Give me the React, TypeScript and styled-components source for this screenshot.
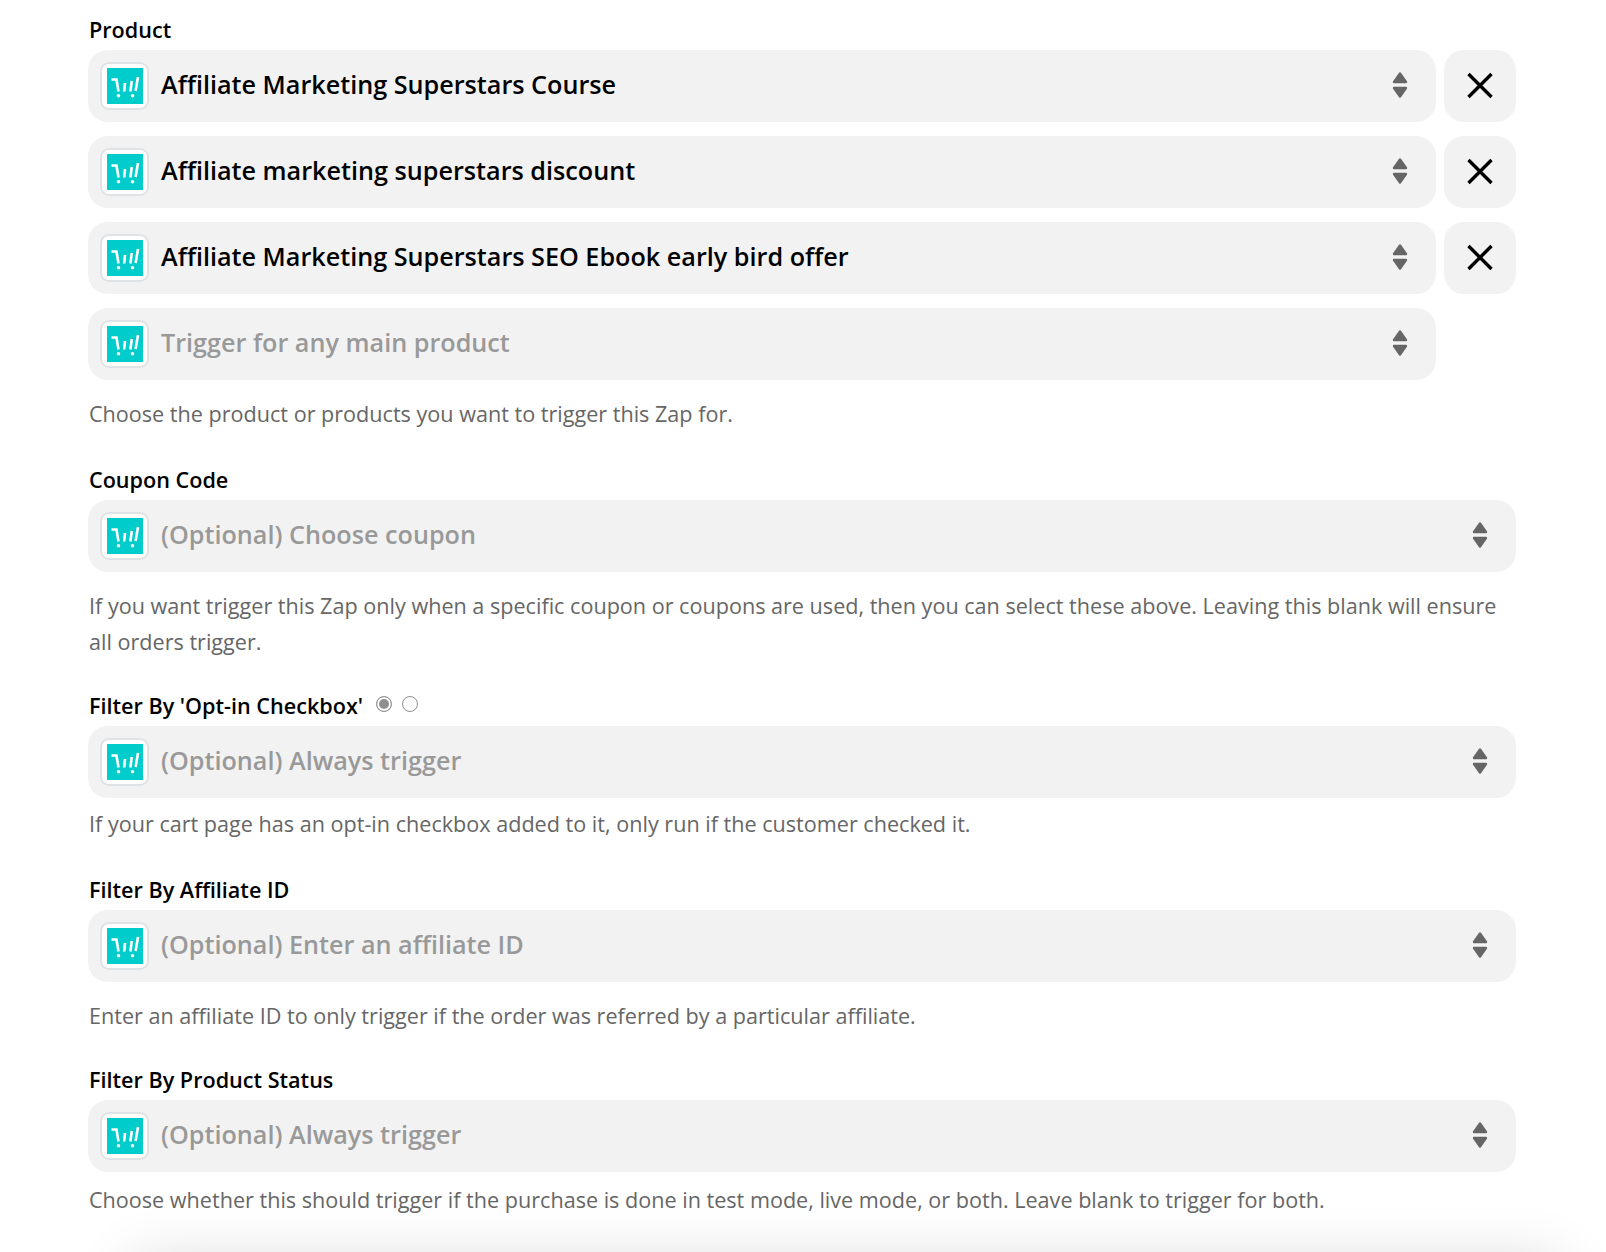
import React from "react";
import styled, { createGlobalStyle } from "styled-components";

const Global = createGlobalStyle`
  html, body { margin: 0; padding: 0; background: #fff; }
  body { font-family: "Open Sans", "Noto Sans", sans-serif; }
`;

const Page = styled.div`
  width: 1606px;
  height: 1252px;
  overflow: hidden;
  box-sizing: border-box;
  padding: 16px 90px 0 88px;
  display: flex;
  flex-direction: column;
`;

const Group = styled.section<{ $mt: number }>`
  margin-top: ${(p) => p.$mt}px;
`;

const LabelRow = styled.div`
  display: flex;
  align-items: center;
  height: 28px;
  padding-left: 1px;
  margin-bottom: 6px;
`;

const Label = styled.label`
  font-size: 21.6px;
  font-weight: 600;
  line-height: 28px;
  color: #000;
`;

const Radios = styled.div`
  display: flex;
  gap: 10px;
  margin-left: 13px;
  margin-top: -4px;
`;

const Radio = styled.span<{ $on?: boolean }>`
  box-sizing: border-box;
  width: 16px;
  height: 16px;
  border-radius: 50%;
  border: 1px solid #8f8f8f;
  background: ${(p) => (p.$on ? "#8f8f8f" : "#fff")};
  box-shadow: ${(p) => (p.$on ? "inset 0 0 0 2px #fff" : "none")};
`;

const Rows = styled.div`
  display: flex;
  flex-direction: column;
  gap: 14px;
`;

const Row = styled.div`
  display: flex;
  gap: 8px;
`;

const Field = styled.div`
  flex: 1;
  height: 72px;
  box-sizing: border-box;
  background: #f2f2f2;
  border-radius: 20px;
  padding: 0 28px 0 12px;
  display: flex;
  align-items: center;
`;

const IconBox = styled.span`
  box-sizing: border-box;
  width: 49px;
  height: 48px;
  background: #fff;
  border: 2px solid #dfe3e6;
  border-radius: 9px;
  display: flex;
  align-items: center;
  justify-content: center;
  flex: none;
`;

const Value = styled.span<{ $placeholder?: boolean }>`
  flex: 1;
  margin-left: 12px;
  padding-bottom: 4px;
  font-size: 25.2px;
  font-weight: 600;
  line-height: 34px;
  color: ${(p) => (p.$placeholder ? "#999999" : "#000")};
  white-space: nowrap;
`;

const RemoveButton = styled.button`
  width: 72px;
  height: 72px;
  border: none;
  padding: 0;
  background: #f2f2f2;
  border-radius: 20px;
  display: flex;
  align-items: center;
  justify-content: center;
  flex: none;
`;

const RemoveSpacer = styled.span`
  width: 72px;
  flex: none;
`;

const Help = styled.p<{ $mt: number }>`
  margin: ${(p) => p.$mt}px 0 0;
  padding-left: 1px;
  font-size: 21.6px;
  line-height: 36px;
  color: #666666;
`;

const FooterShadow = styled.div`
  flex: none;
  height: 60px;
  margin: 45px -44px 0 44px;
  background: #fff;
  box-shadow: 0 0 60px rgba(0, 0, 0, 0.16);
`;

const CartLogo = () => (
  <svg width="36" height="36" viewBox="0 0 36 36" aria-hidden="true">
    <rect width="36" height="36" fill="#00cccc" />
    <g fill="none" stroke="#fff" strokeWidth="2.6">
      <path d="M4.5 11.5H9.5L11.5 23.5" />
      <path d="M18 15L17.2 23.5" />
      <path d="M24.8 13L23.4 23.5" />
      <path d="M31 9L28.6 23" />
    </g>
    <circle cx="11.5" cy="27.8" r="1.8" fill="#fff" />
    <circle cx="25.5" cy="27.8" r="1.8" fill="#fff" />
  </svg>
);

const Updown = () => (
  <svg width="16" height="28" viewBox="0 1 16 28" aria-hidden="true">
    <path d="M8 2.5L14 11H2Z" fill="#666" stroke="#666" strokeWidth="2.4" strokeLinejoin="round" />
    <path d="M8 25.5L14 17H2Z" fill="#666" stroke="#666" strokeWidth="2.4" strokeLinejoin="round" />
  </svg>
);

const Cross = () => (
  <svg width="28" height="28" viewBox="0 0.5 28 28" aria-hidden="true">
    <path d="M2.5 2.5L25.5 25.5M25.5 2.5L2.5 25.5" stroke="#000" strokeWidth="3.4" fill="none" />
  </svg>
);

const Select = ({ text, placeholder }: { text: string; placeholder?: boolean }) => (
  <Field>
    <IconBox>
      <CartLogo />
    </IconBox>
    <Value $placeholder={placeholder}>{text}</Value>
    <Updown />
  </Field>
);

const products = [
  "Affiliate Marketing Superstars Course",
  "Affiliate marketing superstars discount",
  "Affiliate Marketing Superstars SEO Ebook early bird offer",
];

export default function App() {
  return (
    <Page>
      <Global />
      <Group $mt={0}>
        <LabelRow>
          <Label>Product</Label>
        </LabelRow>
        <Rows>
          {products.map((p) => (
            <Row key={p}>
              <Select text={p} />
              <RemoveButton aria-label="Remove">
                <Cross />
              </RemoveButton>
            </Row>
          ))}
          <Row>
            <Select text="Trigger for any main product" placeholder />
            <RemoveSpacer />
          </Row>
        </Rows>
        <Help $mt={16}>Choose the product or products you want to trigger this Zap for.</Help>
      </Group>
      <Group $mt={34}>
        <LabelRow>
          <Label>Coupon Code</Label>
        </LabelRow>
        <Select text="(Optional) Choose coupon" placeholder />
        <Help $mt={16}>
          If you want trigger this Zap only when a specific coupon or coupons are used, then you can select these above. Leaving this blank will ensure all orders trigger.
        </Help>
      </Group>
      <Group $mt={32}>
        <LabelRow>
          <Label>Filter By 'Opt-in Checkbox'</Label>
          <Radios>
            <Radio $on />
            <Radio />
          </Radios>
        </LabelRow>
        <Select text="(Optional) Always trigger" placeholder />
        <Help $mt={8}>If your cart page has an opt-in checkbox added to it, only run if the customer checked it.</Help>
      </Group>
      <Group $mt={34}>
        <LabelRow>
          <Label>Filter By Affiliate ID</Label>
        </LabelRow>
        <Select text="(Optional) Enter an affiliate ID" placeholder />
        <Help $mt={16}>Enter an affiliate ID to only trigger if the order was referred by a particular affiliate.</Help>
      </Group>
      <Group $mt={32}>
        <LabelRow>
          <Label>Filter By Product Status</Label>
        </LabelRow>
        <Select text="(Optional) Always trigger" placeholder />
        <Help $mt={10}>Choose whether this should trigger if the purchase is done in test mode, live mode, or both. Leave blank to trigger for both.</Help>
      </Group>
      <FooterShadow />
    </Page>
  );
}
